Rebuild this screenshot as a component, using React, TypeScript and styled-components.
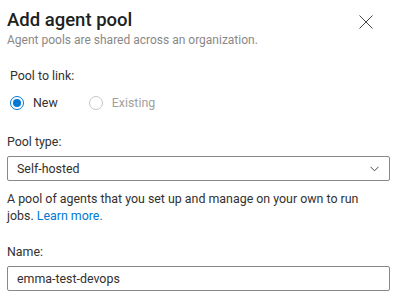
import React from 'react';
import styled, { createGlobalStyle } from 'styled-components';

const GlobalStyle = createGlobalStyle`
  html, body {
    margin: 0;
    padding: 0;
    background: #ffffff;
  }
  body {
    font-family: Roboto, 'Liberation Sans', sans-serif;
    color: #201f1e;
  }
`;

const Panel = styled.div`
  width: 400px;
  height: 307px;
  box-sizing: border-box;
  padding: 8px 10px 0 7px;
  overflow: hidden;
`;

const Header = styled.div`
  display: flex;
  justify-content: space-between;
  align-items: flex-start;
`;

const Title = styled.h1`
  margin: 0;
  font-size: 18.5px;
  font-weight: 500;
  line-height: 24px;
  color: #201f1e;
`;

const Subtitle = styled.div`
  font-size: 12px;
  line-height: 16px;
  color: #8a8886;
`;

const CloseButton = styled.button`
  margin: 7px 17px 0 0;
  padding: 0;
  border: 0;
  background: none;
  width: 14px;
  height: 14px;
  svg {
    display: block;
  }
`;

const Section = styled.div<{ $top: number; $indent?: number }>`
  margin-top: ${({ $top }) => $top}px;
  padding-left: ${({ $indent = 0 }) => $indent}px;
`;

const Label = styled.div`
  font-size: 12.4px;
  line-height: 18px;
  color: #323130;
`;

const RadioGroup = styled.div`
  display: flex;
  gap: 31px;
  margin-top: 9px;
`;

const RadioOption = styled.label<{ $disabled?: boolean }>`
  display: flex;
  align-items: center;
  gap: 9px;
  font-size: 12.4px;
  line-height: 18px;
  color: ${({ $disabled }) => ($disabled ? '#a19f9d' : '#323130')};
`;

const RadioCircle = styled.span<{ $checked?: boolean; $disabled?: boolean }>`
  width: 14px;
  height: 14px;
  border-radius: 50%;
  box-sizing: border-box;
  border: 1px solid
    ${({ $checked, $disabled }) =>
      $checked ? '#0078d4' : $disabled ? '#c8c6c4' : '#323130'};
  display: flex;
  align-items: center;
  justify-content: center;
  &::after {
    content: '';
    display: ${({ $checked }) => ($checked ? 'block' : 'none')};
    width: 8px;
    height: 8px;
    border-radius: 50%;
    background: #0078d4;
  }
`;

const Field = styled.div`
  margin-top: 5px;
  height: 25px;
  box-sizing: border-box;
  border: 1px solid #8a8886;
  border-radius: 2px;
  display: flex;
  align-items: center;
  justify-content: space-between;
  padding: 0 10px 0 9px;
  font-size: 12.4px;
  color: #323130;
  svg {
    display: block;
  }
`;

const Help = styled.p`
  margin: 9px 0 0;
  font-size: 12.4px;
  line-height: 17px;
  color: #323130;
  a {
    color: #0078d4;
    text-decoration: none;
  }
`;

export default function App() {
  return (
    <>
      <GlobalStyle />
      <Panel>
        <Header>
          <div>
            <Title>Add agent pool</Title>
            <Subtitle>Agent pools are shared across an organization.</Subtitle>
          </div>
          <CloseButton aria-label="Close">
            <svg width="14" height="14" viewBox="0 0 14 14">
              <path d="M0.5 0.5 L13.5 13.5 M13.5 0.5 L0.5 13.5" stroke="#484644" strokeWidth="1" fill="none" />
            </svg>
          </CloseButton>
        </Header>

        <Section $top={19} $indent={3}>
          <Label>Pool to link:</Label>
          <RadioGroup>
            <RadioOption>
              <RadioCircle $checked />
              New
            </RadioOption>
            <RadioOption $disabled>
              <RadioCircle $disabled />
              Existing
            </RadioOption>
          </RadioGroup>
        </Section>

        <Section $top={21}>
          <Label>Pool type:</Label>
          <Field>
            <span>Self-hosted</span>
            <svg width="9" height="6" viewBox="0 0 9 6">
              <path d="M0.5 0.8 L4.5 4.8 L8.5 0.8" stroke="#484644" strokeWidth="1" fill="none" />
            </svg>
          </Field>
          <Help>
            A pool of agents that you set up and manage on your own to run
            <br />
            jobs. <a href="#">Learn more.</a>
          </Help>
        </Section>

        <Section $top={19}>
          <Label>Name:</Label>
          <Field>
            <span>emma-test-devops</span>
          </Field>
        </Section>
      </Panel>
    </>
  );
}
